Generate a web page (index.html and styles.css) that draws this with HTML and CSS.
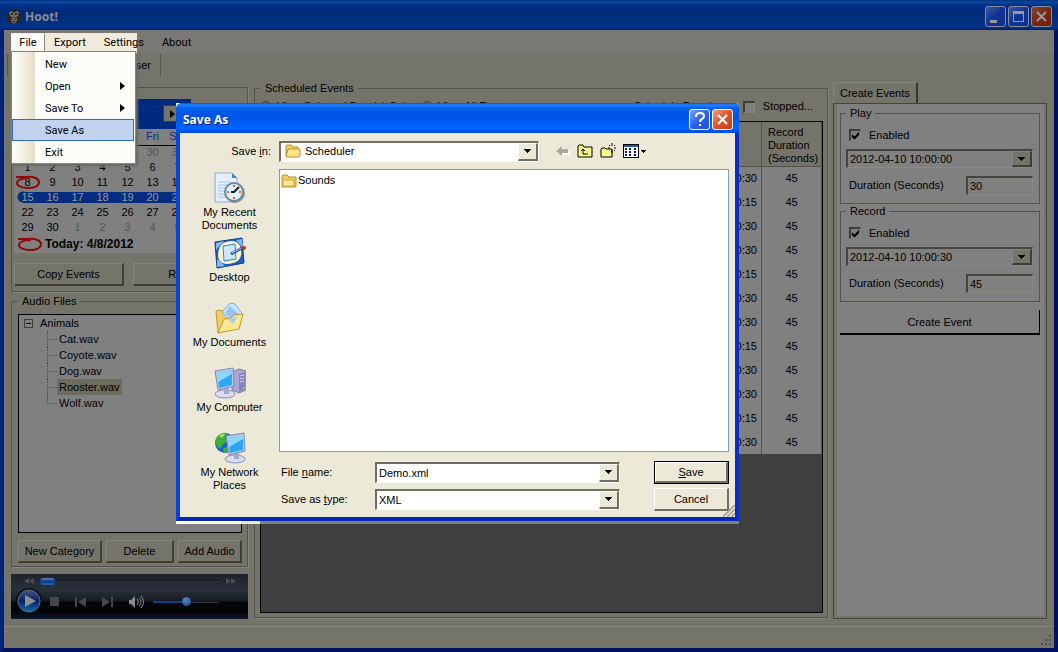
FILE: index.html
```html
<!DOCTYPE html>
<html lang="en">
<head>
    <meta charset="UTF-8">
    <meta name="viewport" content="width=device-width, initial-scale=1.0">
    <title>Hoot!</title>
    <link rel="stylesheet" href="styles.css">
</head>
<body>
    <div class="window">
        <header class="titlebar">
            <svg class="owl" viewBox="0 0 16 16" width="16" height="16">
                <path d="M2 4L1 8l1 4 3 3h6l3-3 1-4-1-4z" fill="#352211"/>
                <path d="M3 3q5-4 10 0l-1 4q-4 3-8 0z" fill="#72706c"/>
                <path d="M3 3q5-5 10 0l-3-1-2 2-2-2z" fill="#2b1d12"/>
                <circle cx="6" cy="5" r="1" fill="#111"/>
                <circle cx="10" cy="5" r="1" fill="#111"/>
                <path d="M7 6h2l-1 2z" fill="#8a5a10"/>
                <path d="M5 9h6v3l-3 3-3-3z" fill="#6d6963"/>
                <path d="M6 10h1v1H6zM9 10h1v1H9zM7 12h2v1H7z" fill="#352211"/>
            </svg>
            <h1>Hoot!</h1>
            <div class="win-buttons">
                <button class="win-btn" aria-label="Minimize"><svg viewBox="0 0 19 19"><path d="M4 13h7v3H4z" fill="#999"/></svg></button>
                <button class="win-btn" aria-label="Maximize"><svg viewBox="0 0 19 19"><path d="M4 4h11v11H4zM5 7v7h9V7z" fill="#999" fill-rule="evenodd"/></svg></button>
                <button class="win-btn close" aria-label="Close"><svg viewBox="0 0 19 19"><path d="M5 5l9 9M14 5l-9 9" stroke="#999" stroke-width="2"/></svg></button>
            </div>
        </header>

        <nav class="menubar">
            <button class="menu-item open">File</button>
            <button class="menu-item">Export</button>
            <button class="menu-item">Settings</button>
            <button class="menu-item">About</button>
            <div class="dropdown">
                <button>New</button>
                <button class="sub">Open</button>
                <button class="sub">Save To</button>
                <button class="active">Save As</button>
                <button>Exit</button>
            </div>
        </nav>

        <div class="toolbar">
            <button>Hide Browser</button>
        </div>

        <main class="main">
            <section class="left">
                <div class="group calendar-group">
                    <div class="calendar">
                        <div class="cal-title"><button class="cal-next" aria-label="Next month"></button></div>
                        <table class="cal-table">
                            <thead>
                                <tr><th></th><th></th><th></th><th></th><th>Thu</th><th>Fri</th><th>Sat</th></tr>
                            </thead>
                            <tbody>
                                <tr class="other"><td></td><td></td><td></td><td></td><td></td><td>30</td><td>31</td></tr>
                                <tr><td>1</td><td>2</td><td>3</td><td>4</td><td>5</td><td>6</td><td>7</td></tr>
                                <tr>
                                    <td class="today">8<svg viewBox="0 0 26 14" width="26" height="14"><path d="M1 2h10c8-1 13 2 13 5 0 4-5 6-11 6S2 11 2 8s5-5 12-5" fill="none" stroke="#900606" stroke-width="2"/></svg></td>
                                    <td>9</td><td>10</td><td>11</td><td>12</td><td>13</td><td>14</td>
                                </tr>
                                <tr class="selected"><td>15</td><td>16</td><td>17</td><td>18</td><td>19</td><td>20</td><td>21</td></tr>
                                <tr><td>22</td><td>23</td><td>24</td><td>25</td><td>26</td><td>27</td><td>28</td></tr>
                                <tr><td>29</td><td>30</td><td class="out">1</td><td class="out">2</td><td class="out">3</td><td class="out">4</td><td class="out">5</td></tr>
                            </tbody>
                        </table>
                        <div class="cal-today">
                            <svg viewBox="0 0 26 14" width="26" height="14"><path d="M1 2h10c8-1 13 2 13 5 0 4-5 6-11 6S2 11 2 8s5-5 12-5" fill="none" stroke="#900606" stroke-width="2"/></svg>
                            Today: 4/8/2012
                        </div>
                    </div>
                    <div class="row cal-buttons">
                        <button class="btn">Copy Events</button>
                        <button class="btn">Refresh</button>
                    </div>
                </div>

                <fieldset class="group audio-group">
                    <legend>Audio Files</legend>
                    <div class="tree">
                        <div class="tree-root"><span class="toggle"></span>Animals</div>
                        <ul>
                            <li><span>Cat.wav</span></li>
                            <li><span>Coyote.wav</span></li>
                            <li><span>Dog.wav</span></li>
                            <li><span class="picked">Rooster.wav</span></li>
                            <li><span>Wolf.wav</span></li>
                        </ul>
                    </div>
                    <div class="audio-buttons">
                        <button class="btn">New Category</button>
                        <button class="btn">Delete</button>
                        <button class="btn">Add Audio</button>
                    </div>
                </fieldset>

                <div class="player">
                    <div class="seek">
                        <svg viewBox="0 0 10 6" width="10" height="6"><path d="M5 0v6L0 3zM10 0v6L5 3z" fill="#4a4d52"/></svg>
                        <input type="range" class="seek-range" aria-label="Seek" min="0" max="100" value="0">
                        <svg viewBox="0 0 10 6" width="10" height="6"><path d="M0 0v6l5-3zM5 0v6l5-3z" fill="#4a4d52"/></svg>
                    </div>
                    <div class="controls">
                        <button class="play" aria-label="Play"><svg viewBox="0 0 27 27" width="27" height="27">
                            <defs>
                                <linearGradient id="playFill" x1="0" y1="0" x2="0" y2="1">
                                    <stop offset="0" stop-color="#41557f"/>
                                    <stop offset=".5" stop-color="#08206a"/>
                                    <stop offset="1" stop-color="#126fa5"/>
                                </linearGradient>
                            </defs>
                            <circle cx="13" cy="13" r="13" fill="#0a0d14"/>
                            <circle cx="13" cy="13" r="11" fill="url(#playFill)" stroke="#5b6880"/>
                            <path d="M9 7l11 6-11 6z" fill="#8b8f96"/>
                        </svg></button>
                        <button aria-label="Stop"><svg viewBox="0 0 10 10" width="10" height="10"><path d="M0 0h9v9H0z" fill="#44474b"/></svg></button>
                        <button aria-label="Previous"><svg viewBox="0 0 12 10" width="12" height="10"><path d="M0 0h2v10H0zM11 0v10L3 5z" fill="#44474b"/></svg></button>
                        <button aria-label="Next"><svg viewBox="0 0 12 10" width="12" height="10"><path d="M9 0h2v10H9zM0 0v10l8-5z" fill="#44474b"/></svg></button>
                        <button aria-label="Mute"><svg viewBox="0 0 16 12" width="16" height="12"><path d="M0 4h2l4-4v12L2 8H0z" fill="#85878a"/><path d="M8 3q3 3 0 6M10 2q4 4 0 8M12 0q5 6 0 12" fill="none" stroke="#85878a"/></svg></button>
                        <input type="range" class="volume" aria-label="Volume" min="0" max="100" value="50">
                    </div>
                </div>
            </section>

            <fieldset class="group middle">
                <legend>Scheduled Events</legend>
                <div class="filters">
                    <label class="f-sel"><input type="radio" name="view">View Selected Date(s) Only</label>
                    <label><input type="radio" name="view">View All Events</label>
                    <span class="f-run">Schedule Running:</span>
                    <label class="f-stop"><input type="checkbox" class="check">Stopped...</label>
                </div>
                <div class="grid-box">
                    <table class="events">
                        <thead>
                            <tr><th>File</th><th>Play Date</th><th>Record Date</th><th class="dur">Record Duration (Seconds)</th></tr>
                        </thead>
                        <tbody>
                            <tr><td>Rooster.wav</td><td>10:00:00</td><td>10:00:30</td><td>45</td></tr>
                            <tr><td>Cat.wav</td><td>10:00:00</td><td>10:00:15</td><td>45</td></tr>
                            <tr><td>Dog.wav</td><td>10:00:00</td><td>10:00:30</td><td>45</td></tr>
                            <tr><td>Rooster.wav</td><td>10:00:00</td><td>10:00:30</td><td>45</td></tr>
                            <tr><td>Cat.wav</td><td>10:00:00</td><td>10:00:15</td><td>45</td></tr>
                            <tr><td>Dog.wav</td><td>10:00:00</td><td>10:00:30</td><td>45</td></tr>
                            <tr><td>Rooster.wav</td><td>10:00:00</td><td>10:00:30</td><td>45</td></tr>
                            <tr><td>Cat.wav</td><td>10:00:00</td><td>10:00:15</td><td>45</td></tr>
                            <tr><td>Dog.wav</td><td>10:00:00</td><td>10:00:30</td><td>45</td></tr>
                            <tr><td>Rooster.wav</td><td>10:00:00</td><td>10:00:30</td><td>45</td></tr>
                            <tr><td>Cat.wav</td><td>10:00:00</td><td>10:00:15</td><td>45</td></tr>
                            <tr><td>Dog.wav</td><td>10:00:00</td><td>10:00:30</td><td>45</td></tr>
                        </tbody>
                    </table>
                </div>
            </fieldset>

            <section class="right">
                <button class="tab">Create Events</button>
                <div class="tab-page">
                    <fieldset class="group form">
                        <legend>Play</legend>
                        <label class="enabled"><input type="checkbox" class="check" checked>Enabled</label>
                        <div class="combo">
                            <select aria-label="Play time"><option>2012-04-10 10:00:00</option></select>
                        </div>
                        <div class="duration">
                            <label for="play-dur">Duration (Seconds)</label>
                            <input type="text" id="play-dur" value="30">
                        </div>
                    </fieldset>
                    <fieldset class="group form">
                        <legend>Record</legend>
                        <label class="enabled"><input type="checkbox" class="check" checked>Enabled</label>
                        <div class="combo">
                            <select aria-label="Record time"><option>2012-04-10 10:00:30</option></select>
                        </div>
                        <div class="duration">
                            <label for="rec-dur">Duration (Seconds)</label>
                            <input type="text" id="rec-dur" value="45">
                        </div>
                    </fieldset>
                    <button class="create">Create Event</button>
                </div>
            </section>
        </main>

        <footer class="statusbar">
            <svg viewBox="0 0 12 12" width="12" height="12"><path d="M9 1h2v2H9zM5 5h2v2H5zM9 5h2v2H9zM1 9h2v2H1zM5 9h2v2H5zM9 9h2v2H9z" fill="#504e47"/></svg>
        </footer>
    </div>

    <!-- Save As dialog -->
    <div class="dialog-area">
        <div class="dialog" role="dialog" aria-labelledby="dlg-title">
            <div class="dialog-title">
                <h2 id="dlg-title">Save As</h2>
                <button class="win-btn" aria-label="Help"><svg viewBox="0 0 19 19"><path d="M6 7q0-4 4-4 4 0 4 3 0 2-2 3-2 1-2 3" fill="none" stroke="#fff" stroke-width="2"/><path d="M9 14h2v2H9z" fill="#fff"/></svg></button>
                <button class="win-btn close" aria-label="Close"><svg viewBox="0 0 19 19"><path d="M5 5l9 9M14 5l-9 9" stroke="#fff" stroke-width="2"/></svg></button>
            </div>
            <div class="dialog-body">
                <div class="save-in">
                    <label for="folder">Save <u>i</u>n:</label>
                    <div class="combo folder-combo">
                        <svg class="folder" viewBox="0 0 16 14" width="16" height="14"><path d="M1 12V2l1-1h4l2 2h5v9z" fill="#f2ce5c" stroke="#b8912a"/><path d="M1 13l2-8h12v7l-1 1z" fill="#fbe48a" stroke="#b8912a"/></svg>
                        <select id="folder"><option>Scheduler</option></select>
                    </div>
                    <div class="tools">
                        <button aria-label="Back"><svg viewBox="0 0 14 12" width="14" height="12"><path d="M1 7l6-5v4h7v4H8v2z" fill="#fff"/><path d="M0 6l6-5v3h6v4H6v3z" fill="#aca899"/></svg></button>
                        <button aria-label="Up one level"><svg viewBox="0 0 16 14" width="16" height="14"><path d="M1 13V2l1-1h4l1 2h8v10z" fill="#fdf98c" stroke="#000"/><path d="M4 7l2-2 2 2M6 5v5h5" fill="none" stroke="#000"/></svg></button>
                        <button aria-label="New folder"><svg viewBox="0 0 16 16" width="16" height="16"><path d="M1 14V6l1-1h3l1 1h6v8z" fill="#fdf98c" stroke="#000"/><path d="M12 0v3M12 7v3M8 5h2M14 5h2M9 2l1 1M14 3l1-1M14 7l1 1" stroke="#000"/></svg></button>
                        <button aria-label="View"><svg viewBox="0 0 24 14" width="24" height="14"><path d="M0 0h16v14H0z" fill="#000"/><path d="M1 3h14v10H1z" fill="#fff"/><path d="M1 1h14v2H1z" fill="#1e5a9e"/><path d="M2 4h2v2H2zM6 4h2v2H6zM11 4h2v2h-2zM2 7h2v2H2zM6 7h2v2H6zM11 7h2v2h-2zM2 10h2v2H2zM6 10h2v2H6zM11 10h2v2h-2z" fill="#10107a"/><path d="M18 6h5v1h-1v1h-1v1h-1V8h-1V7h-1z" fill="#000"/></svg></button>
                    </div>
                </div>

                <div class="dialog-mid">
                    <div class="places">
                        <button>
                            <svg viewBox="0 0 32 32" width="32" height="32">
                                <path d="M1 1h17l5 5v24H1z" fill="#e6effc" stroke="#8aa6dc"/>
                                <path d="M18 1v5h5z" fill="#3a86e0"/>
                                <path d="M4 10h13M4 13h11M4 16h8M4 19h7M4 22h7M4 25h8" stroke="#a9c5f2"/>
                                <circle cx="21" cy="21" r="10" fill="#8f969e"/>
                                <circle cx="20" cy="20" r="9" fill="#dff1fb" stroke="#6f8796" stroke-width="2"/>
                                <path d="M20 13v2M20 25v2M13 20h2M25 20h2" stroke="#e0622a" stroke-width="2"/>
                                <path d="M25 15l-5 5h-3" fill="none" stroke="#14202c" stroke-width="2"/>
                            </svg>
                            My Recent Documents
                        </button>
                        <button>
                            <svg viewBox="0 0 32 32" width="32" height="32">
                                <path d="M1 5l27-4 2 25-27 5z" fill="#1d5fbd" stroke="#0d3c86"/>
                                <path d="M2 6l8-2-8 9zM28 2l1 9-7-8zM3 22v8l8-1z" fill="#7fb9f3"/>
                                <path d="M9 6q13-5 17 3 4 11-4 16-12 5-17-2-3-10 4-17z" fill="#fdf3c4"/>
                                <path d="M9 9l12-2 1 15-12 2z" fill="#cfe6ff" stroke="#2f82dc"/>
                                <path d="M17 17l11-6" stroke="#2d5f9c" stroke-width="3"/>
                                <path d="M18 16l9-5" stroke="#9fd0f8"/>
                                <circle cx="30" cy="11" r="2" fill="#c92d16"/>
                            </svg>
                            Desktop
                        </button>
                        <button>
                            <svg viewBox="0 0 32 32" width="32" height="32">
                                <path d="M2 9l4-1 8 3v14L4 31z" fill="#f3cf62" stroke="#c69526"/>
                                <path d="M8 10l7-8q3-2 6 0l8 11-10 9z" fill="#cbe4fc" stroke="#78aee0"/>
                                <path d="M16 4l9 8-7 6-7-7z" fill="#94c4f2"/>
                                <path d="M4 31l6-14 7-1 3-3 9-1-4 15z" fill="#ffe893" stroke="#c69526"/>
                                <path d="M14 17l10-3-5 8z" fill="#9fd0f8"/>
                            </svg>
                            My Documents
                        </button>
                        <button>
                            <svg viewBox="0 0 32 32" width="32" height="32">
                                <path d="M18 5l7-3 7 2v19l-7 3-7-3z" fill="#a9a7d6" stroke="#7e7cae"/>
                                <path d="M25 7l6-2v17l-6 3z" fill="#8583b8"/>
                                <path d="M26 9l4-1M26 12l4-1M26 15l4-1" stroke="#dcdcf4"/>
                                <path d="M29 20h2v2h-2z" fill="#6dd34b"/>
                                <ellipse cx="11" cy="27" rx="10" ry="4" fill="#d9dbee" stroke="#8f90b6"/>
                                <path d="M10 20h5v7h-5z" fill="#a6a8ca"/>
                                <path d="M1 4l18-3 1 18-16 4z" fill="#c5cdec" stroke="#7b86b8"/>
                                <path d="M3 6l15-3v15L5 21z" fill="#2ba6f3"/>
                                <path d="M3 6l15-3v4L4 15z" fill="#8cd8fb"/>
                            </svg>
                            My Computer
                        </button>
                        <button>
                            <svg viewBox="0 0 32 32" width="32" height="32">
                                <circle cx="11" cy="11" r="10" fill="#1b62c4"/>
                                <path d="M3 5q5-5 10-4l-2 5 2 4-4 2-3 5q-5-4-5-8zM9 16l5-1v5l-4 1z" fill="#3fae3b"/>
                                <path d="M5 4q3-3 6-2L8 6z" fill="#a9e25c"/>
                                <ellipse cx="21" cy="27" rx="10" ry="4" fill="#d9dbee" stroke="#8f90b6"/>
                                <path d="M20 20h5v7h-5z" fill="#a6a8ca"/>
                                <path d="M12 4l18-3 1 18-16 4z" fill="#c5cdec" stroke="#7b86b8"/>
                                <path d="M14 6l15-3v15l-13 3z" fill="#2ba6f3"/>
                                <path d="M14 6l15-3v4l-14 8z" fill="#8cd8fb"/>
                            </svg>
                            My Network Places
                        </button>
                    </div>
                    <div class="file-side">
                        <div class="file-list">
                            <svg viewBox="0 0 16 14" width="16" height="14"><path d="M1 12V2l1-1h4l2 2h7v10H1z" fill="#f2ce5c" stroke="#b8912a"/><path d="M2 6h11v6H2z" fill="#fdeca0" stroke="#cfa63c"/></svg>
                            <span>Sounds</span>
                        </div>
                        <div class="file-form">
                            <label for="fname">File <u>n</u>ame:</label>
                            <div class="combo"><input type="text" id="fname" value="Demo.xml"></div>
                            <button class="btn default"><u>S</u>ave</button>
                            <label for="ftype">Save as <u>t</u>ype:</label>
                            <div class="combo"><select id="ftype"><option>XML</option></select></div>
                            <button class="btn">Cancel</button>
                        </div>
                    </div>
                </div>
                <svg class="grip" viewBox="0 0 12 12" width="12" height="12"><path d="M0 12L12 0M4 12l8-8M8 12l4-4" stroke="#aca899" stroke-width="2"/><path d="M2 12L12 2M6 12l6-6" stroke="#fff"/></svg>
            </div>
        </div>
    </div>
</body>
</html>
```
FILE: styles.css
```css
* {
    box-sizing: border-box;
}
body {
    margin: 0;
    font-family: "Liberation Sans", Arial, sans-serif;
    font-size: 11px;
    line-height: 13px;
    color: #000;
}
button, input, select {
    font: inherit;
    color: inherit;
    margin: 0;
    padding: 0;
    border-radius: 0;
}
button {
    border: none;
    background: none;
    white-space: nowrap;
}
h1, h2 {
    margin: 0;
    font-family: "Noto Sans", "Open Sans", sans-serif;
    font-size: 12px;
    line-height: 16px;
    font-weight: bold;
    flex: 1;
}
svg {
    display: block;
    flex: none;
}

/* main window */
.window {
    display: flex;
    flex-direction: column;
    min-height: 100vh;
    background: #75746b;
    border: solid #00186c;
    border-width: 0 4px 4px;
    border-color: #001a6e #001260 #001260 #002479;
}
.titlebar {
    display: flex;
    align-items: center;
    height: 30px;
    margin: 0 -4px;
    padding: 3px 6px 0;
    background: linear-gradient(#01307f 0, #0a4a9c 2px, #00308a 5px, #002a78 12px, #00317f 22px, #003590 27px, #001f6b 30px);
    color: #8c8c8c;
}
.owl {
    margin-right: 3px;
}
.win-buttons {
    display: flex;
    gap: 2px;
}
.win-btn {
    width: 21px;
    height: 21px;
    border: 1px solid #8b8d96;
    border-radius: 3px;
    background: linear-gradient(135deg, #3a58a6, #10328f 50%, #0b2f96);
}
.win-btn.close {
    background: linear-gradient(135deg, #8a4330, #7c2710 50%, #6d1d05);
}

/* menu */
.menubar {
    position: relative;
    z-index: 2;
    display: flex;
    height: 23px;
    padding: 3px 0 0 7px;
    background: #7a7874;
    font-family: Roboto, "Noto Sans", sans-serif;
    font-size: 11px;
}
.menubar::before {
    content: "";
    position: absolute;
    left: 7px;
    top: 3px;
    width: 126px;
    height: 30px;
    background: #efeadc;
}
.menu-item {
    position: relative;
    height: 19px;
    padding: 0 8px;
    border: 1px solid transparent;
}
.menu-item.open {
    width: 34px;
    padding: 0;
    background: linear-gradient(#fff, #f6f5ef);
    border-color: #f2f0ea #8a867a #f2f0ea #f2f0ea;
}
.dropdown {
    position: absolute;
    left: 7px;
    top: 21px;
    width: 125px;
    display: flex;
    flex-direction: column;
    padding: 1px 1px 0 0;
    border: 1px solid #8a867a;
    background: linear-gradient(90deg, #fefefb, #f3efe2 12px, #e3dcc8 23px, #fcfcf9 23px);
    box-shadow: 2px 2px 2px #6b6a64;
}
.dropdown button {
    position: relative;
    height: 22px;
    padding-left: 32px;
    border: 1px solid transparent;
    text-align: left;
}
.dropdown .active {
    background: #c1d2ee;
    border-color: #316ac5;
}
.dropdown .sub::after {
    content: "";
    position: absolute;
    right: 8px;
    top: 6px;
    border: 4px solid transparent;
    border-left: 5px solid #000;
    border-right: none;
}
.toolbar {
    display: flex;
    height: 24px;
    padding: 1px 3px;
}
.toolbar button {
    width: 154px;
    padding-right: 9px;
    border: 1px solid #55534b;
    border-width: 0 1px;
    text-align: right;
}

/* shared */
.group {
    margin: 0;
    min-width: 0;
    border: 1px solid #55534b;
    box-shadow: 1px 1px 0 #85847d;
}
legend {
    padding: 0 4px;
}
.row {
    display: flex;
}
.btn {
    background: #75746b;
    border: solid #36352f;
    border-width: 1px 2px 2px 1px;
    border-color: #85847d #3e3d37 #3e3d37 #85847d;
}
.check {
    appearance: none;
    position: relative;
    width: 12px;
    height: 12px;
    border: solid #3e3d37;
    border-width: 2px 1px 1px 2px;
    border-color: #3e3d37 #85847d #85847d #3e3d37;
    background: #808080;
}
.check:checked::after {
    content: "";
    position: absolute;
    inset: 0;
    background: #000;
    clip-path: polygon(10% 35%, 40% 60%, 90% 5%, 90% 45%, 40% 95%, 10% 70%);
}
.combo {
    position: relative;
}
.combo select, .combo input {
    appearance: none;
    display: block;
    width: 100%;
    height: 19px;
    padding: 0 20px 0 2px;
    border: solid #3e3d37;
    border-width: 2px 1px 1px 2px;
    border-color: #45443d #8b8a80 #8b8a80 #45443d;
    background: #808080;
}
.combo::after {
    content: "";
    position: absolute;
    right: 1px;
    top: 2px;
    bottom: 1px;
    width: 17px;
    border: solid #3e3d37;
    border-width: 1px 2px 2px 1px;
    border-color: #85847d #3e3d37 #3e3d37 #85847d;
    background: linear-gradient(#000, #000) center 5px / 7px 1px no-repeat,
        linear-gradient(#000, #000) center 6px / 5px 1px no-repeat,
        linear-gradient(#000, #000) center 7px / 3px 1px no-repeat,
        linear-gradient(#000, #000) center 8px / 1px 1px no-repeat,
        #75746b;
    pointer-events: none;
}

.main {
    flex: 1;
    display: flex;
    gap: 5px;
    padding: 5px 7px 7px;
}
.left {
    display: flex;
    flex-direction: column;
    width: 237px;
    margin-right: 1px;
    padding-top: 5px;
}
.calendar-group {
    padding: 11px 4px 5px 2px;
}
.calendar {
    width: 177px;
    background: #808080;
}
.cal-title {
    display: flex;
    justify-content: flex-end;
    height: 30px;
    padding: 6px 10px;
    background: #002a80;
}
.cal-next {
    width: 18px;
    height: 17px;
    padding-left: 6px;
    background: #75746b;
    border: 1px solid #3e3d37;
}
.cal-next::after {
    content: "";
    display: block;
    width: 0;
    border: 4px solid transparent;
    border-left: 5px solid #000;
    border-right: none;
}
.cal-table {
    table-layout: fixed;
    width: 175px;
    margin: 0 1px;
    border-collapse: collapse;
    text-align: center;
}
.cal-table th {
    height: 16px;
    padding: 0;
    border-bottom: 1px solid #000;
    color: #0a2f85;
    font-weight: normal;
}
.cal-table td {
    position: relative;
    height: 15px;
    padding: 0;
}
.cal-table .other, .cal-table .out {
    color: #56564f;
}
.cal-table .selected td {
    color: #9a9a9a;
    background: linear-gradient(#042c80, #042c80) center / 100% 11px no-repeat;
}
.cal-table .selected td:first-child {
    background: radial-gradient(circle at 8px 7px, #042c80 5px, transparent 6px),
        linear-gradient(#042c80, #042c80) right / 17px 11px no-repeat;
}
.today svg {
    position: absolute;
    left: 0;
    top: 0;
}
.cal-today {
    display: flex;
    align-items: center;
    gap: 2px;
    height: 18px;
    padding-left: 3px;
    font-size: 12px;
    font-weight: bold;
}
.cal-buttons {
    gap: 9px;
    margin-top: 10px;
}
.cal-buttons .btn {
    flex: 1;
    height: 23px;
}
.audio-group {
    flex: 1;
    display: flex;
    flex-direction: column;
    margin-top: 3px;
    padding: 6px 5px 3px 6px;
}
.tree {
    flex: 1;
    padding-left: 5px;
    border: 1px solid #000;
    background: #808080;
}
.tree-root {
    display: flex;
    align-items: center;
    height: 16px;
}
.toggle {
    width: 9px;
    height: 9px;
    margin-right: 7px;
    border: 1px solid #3e3d37;
    background: linear-gradient(#000, #000) center / 5px 1px no-repeat;
}
.tree ul {
    margin: 0 0 0 23px;
    padding: 0;
    list-style: none;
}
.tree li {
    height: 16px;
    padding-left: 9px;
    border-left: 1px dotted #4c4b45;
    background: repeating-linear-gradient(90deg, #4c4b45 0 1px, transparent 1px 2px) 0 8px / 9px 1px no-repeat;
}
.tree li:last-child {
    height: 9px;
}
.tree span {
    display: inline-block;
    line-height: 16px;
}
.tree li span {
    padding: 0 2px;
}
.tree .picked {
    background: #6d6c5e;
}
.audio-buttons {
    display: grid;
    grid-template-columns: 84fr 68fr 64fr;
    gap: 4px;
    margin-top: 7px;
}
.audio-buttons .btn {
    height: 23px;
}
.player {
    height: 45px;
    margin-top: 7px;
    background: linear-gradient(#1d222c, #2a303c 16px, #161a22 27px, #040506 28px, #050608 38px, #0c1730 45px);
}
.seek {
    display: flex;
    align-items: center;
    gap: 6px;
    height: 14px;
    padding: 0 12px 0 13px;
}
.controls {
    display: flex;
    align-items: center;
    gap: 15px;
    height: 27px;
    padding-left: 5px;
}
.controls .play {
    margin-right: -8px;
}
.player input {
    appearance: none;
    height: 10px;
    background: linear-gradient(#05070c, #3f4959) center / 100% 2px no-repeat;
}
.player .seek-range {
    flex: 1;
    width: 0;
}
.player .volume {
    width: 66px;
    margin-left: -7px;
    background: linear-gradient(#123c8c, #123c8c) left / 33px 2px no-repeat,
        linear-gradient(#05070c, #3f4959) center / 100% 2px no-repeat;
}
.seek-range::-webkit-slider-thumb {
    appearance: none;
    width: 15px;
    height: 7px;
    border-radius: 4px;
    background: linear-gradient(#5d86b8, #093a90 50%, #1c6ea8);
}
.volume::-webkit-slider-thumb {
    appearance: none;
    width: 9px;
    height: 9px;
    border-radius: 50%;
    background: radial-gradient(circle at 40% 30%, #5f83b8, #0f429a);
}

/* scheduled events */
.middle {
    flex: 1;
    display: flex;
    flex-direction: column;
    margin-bottom: 1px;
    padding: 5px 4px 4px 5px;
}
.middle legend {
    padding: 0 4px 0 5px;
}
.filters {
    display: flex;
    align-items: center;
    height: 13px;
    margin-bottom: 8px;
}
.filters label {
    display: flex;
    align-items: center;
    gap: 5px;
}
.filters .f-sel {
    width: 161px;
}
.filters .f-run {
    margin-left: auto;
    margin-right: 16px;
}
.filters .f-stop {
    gap: 8px;
    margin-right: 10px;
}
.filters input[type="radio"] {
    appearance: none;
    width: 12px;
    height: 12px;
    border: 1px solid #3e3d37;
    border-radius: 50%;
}
.grid-box {
    flex: 1;
    border: 1px solid #000;
    background: #3f3f3f;
}
.events {
    width: 100%;
    border-collapse: collapse;
    table-layout: fixed;
    background: #808080;
}
.events th {
    height: 44px;
    padding: 4px 5px 0 6px;
    border: solid #55534b;
    border-width: 0 1px 1px 0;
    background: #75746b;
    font-weight: normal;
    text-align: left;
}
.events .dur {
    width: 60px;
    padding-right: 0;
}
.events td {
    height: 24px;
    padding: 0 4px;
    border-right: 1px solid #55534b;
    text-align: right;
}
.events td:last-child {
    text-align: center;
}

/* create events */
.right {
    display: flex;
    flex-direction: column;
    align-items: flex-start;
    width: 214px;
}
.tab {
    height: 21px;
    padding: 0 6px;
    border: solid #3e3d37;
    border-width: 1px 2px 0 1px;
    border-color: #85847d #36352f #36352f #85847d;
    border-radius: 2px 2px 0 0;
}
.tab-page {
    flex: 1;
    align-self: stretch;
    display: flex;
    flex-direction: column;
    padding: 3px 4px 3px 3px;
    border: 3px solid #75746b;
    border-width: 1px 3px 3px 4px;
    outline: 1px solid #45443d;
    outline-offset: -1px;
    background: #808080;
}
.form {
    margin-bottom: 1px;
    padding: 7px 6px 8px 5px;
}
.enabled {
    display: flex;
    align-items: center;
    gap: 8px;
    height: 19px;
    padding: 0 3px 3px;
}
.form .combo {
    margin-top: 3px;
}
.duration {
    display: flex;
    align-items: center;
    justify-content: space-between;
    margin-top: 8px;
    padding-left: 3px;
}
.duration input {
    width: 67px;
    height: 19px;
    padding-left: 2px;
    border: solid #3e3d37;
    border-width: 2px 1px 1px 2px;
    border-color: #45443d #8b8a80 #8b8a80 #45443d;
    background: #808080;
}
.create {
    height: 25px;
    margin-top: 7px;
    padding-top: 2px;
    border: solid #000;
    border-width: 0 1px 2px 0;
}
.statusbar {
    display: flex;
    align-items: flex-end;
    justify-content: flex-end;
    height: 22px;
    padding: 2px;
    border-top: 1px solid #85847d;
}

/* dialog */
.dialog-area {
    position: absolute;
    left: 176px;
    top: 103px;
    z-index: 3;
    width: 563px;
    padding-bottom: 3px;
    background: linear-gradient(90deg, #fff 66px, #ece9d8 66px 84px, #808080 84px);
}
.dialog {
    border: solid #0831d9;
    border-width: 0 4px 4px;
    border-color: #0a3fe0 #0a2ccc #0526b5 #0a3fe0;
    border-radius: 6px 6px 0 0;
    background: #0831d9;
}
.dialog-title {
    display: flex;
    align-items: center;
    gap: 2px;
    height: 30px;
    margin: 0 -4px;
    padding: 3px 6px 0 7px;
    border-radius: 6px 6px 0 0;
    background: linear-gradient(#0a50d8 0, #1f83ff 2px, #0560f0 5px, #0054e3 12px, #005bf0 18px, #0066ff 25px, #0048d8 30px);
    color: #fff;
    text-shadow: 1px 1px #0a1883;
}
.dialog .win-btn {
    border-color: #fff;
    background: linear-gradient(135deg, #7ba0f5, #2d62e8 50%, #1c4fd8);
}
.dialog .win-btn.close {
    background: linear-gradient(135deg, #f09b80, #e2532b 50%, #c93a10);
}
.dialog-body {
    position: relative;
    height: 384px;
    padding: 8px 6px 6px 8px;
    background: #ece9d8;
}
.save-in {
    display: flex;
    align-items: center;
    height: 20px;
}
.save-in label {
    width: 83px;
    margin-right: 8px;
    text-align: right;
}
.dialog .combo select, .dialog .combo input {
    height: 21px;
    background: #fff;
    border-color: #716f64 #fff #fff #716f64;
}
.dialog .combo::after {
    border-color: #fff #716f64 #716f64 #fff;
    background-color: #ece9d8;
}
.folder-combo {
    width: 260px;
}
.dialog .folder-combo select {
    padding-left: 24px;
}
.folder {
    position: absolute;
    left: 6px;
    top: 3px;
}
.tools {
    display: flex;
    align-items: center;
    gap: 7px;
    margin-left: 17px;
}
.dialog-mid {
    display: flex;
    margin-top: 8px;
}
.places {
    width: 83px;
    margin-right: 8px;
}
.places button {
    display: flex;
    flex-direction: column;
    align-items: center;
    gap: 2px;
    width: 100%;
    height: 65px;
    padding-top: 3px;
    white-space: normal;
}
.file-side {
    flex: 1;
}
.file-list {
    display: flex;
    align-items: flex-start;
    height: 283px;
    padding: 4px 1px;
    border: 1px solid #7f9db9;
    background: #fff;
}
.file-list span {
    margin-left: 1px;
}
.file-form {
    display: grid;
    grid-template-columns: 96px 245px 1fr;
    row-gap: 4px;
    align-items: center;
    margin-top: 9px;
}
.file-form label {
    padding-left: 2px;
}
.file-form .btn {
    justify-self: end;
    width: 75px;
    height: 23px;
}
.dialog .btn {
    background: #ece9d8;
    border-color: #fff #716f64 #716f64 #fff;
}
.dialog .btn.default {
    outline: 1px solid #000;
    outline-offset: -1px;
    border-width: 2px 3px 3px 2px;
}
.grip {
    position: absolute;
    right: 0;
    bottom: 0;
}
```
